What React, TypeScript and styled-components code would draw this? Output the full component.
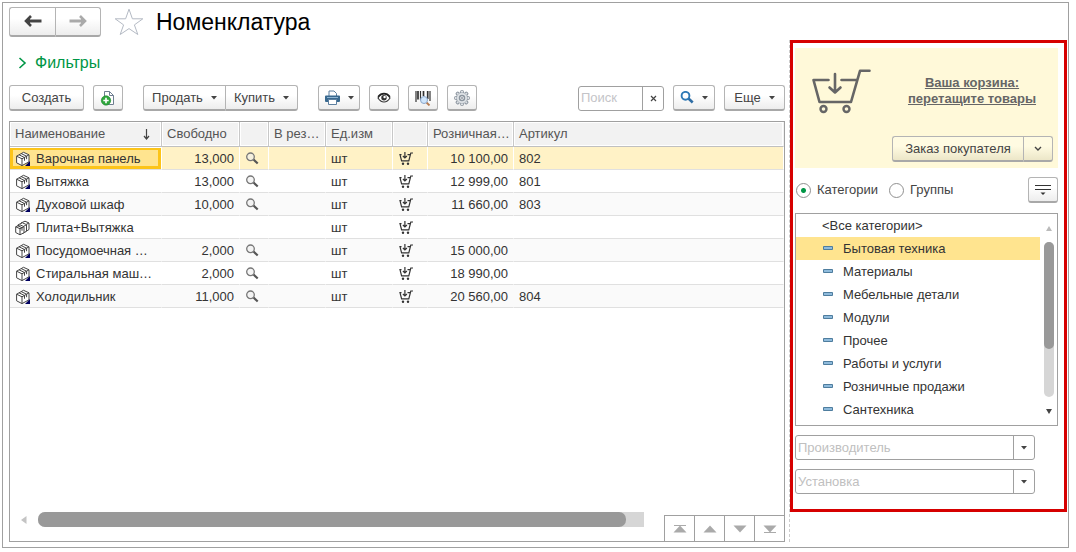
import React, { useState } from "react";
import styled, { createGlobalStyle, css } from "styled-components";

const GlobalStyle = createGlobalStyle`
  * { box-sizing: border-box; }
  body {
    margin: 0;
    background: #fff;
    color: #333;
    font: 13px/16px "Liberation Sans", Arial, sans-serif;
  }
  button, input, select { font: inherit; color: inherit; margin: 0; }
  svg { display: block; flex: none; }
`;

const line = "#a0a0a0";

const Window = styled.div`
  display: grid;
  grid-template-rows: 37px 1fr;
  min-height: calc(100vh - 6px);
  margin: 2px 7px 4px 2px;
  border: 1px solid ${line};
`;

const TitleBar = styled.header`
  display: flex;
  align-items: center;
  padding: 0 6px;
`;

const Title = styled.h1`
  margin: 0 0 0 12px;
  font-size: 23px;
  line-height: 28px;
  font-weight: 400;
  color: #000;
`;

const Body = styled.div`
  display: grid;
  grid-template-columns: minmax(0, 1fr) 278px;
  gap: 4px;
  padding-right: 1px;
`;

const Main = styled.main`
  display: flex;
  flex-direction: column;
  min-width: 0;
  padding: 10px 0 5px 6px;
`;

const raised = css`
  border: 1px solid #b4b4b4;
  border-bottom: 2px solid #a8a8a8;
  background: linear-gradient(#fff 40%, #ededed);
`;

const Button = styled.button<{ $width?: number; $tall?: boolean; $cream?: boolean }>`
  ${raised}
  display: flex;
  align-items: center;
  justify-content: center;
  gap: 8px;
  flex: none;
  width: ${(p) => (p.$width ? `${p.$width}px` : "auto")};
  height: ${(p) => (p.$tall ? 30 : 26)}px;
  padding: 0;
  border-radius: 3px;
  color: #444;
  white-space: nowrap;
  ${(p) => p.$cream && "background: linear-gradient(#fffbe2 40%, #ece6c8);"}
`;

const Joined = styled.div`
  display: flex;
  & > button:not(:last-child) { border-top-right-radius: 0; border-bottom-right-radius: 0; border-right-width: 0; }
  & > button:not(:first-child) { border-top-left-radius: 0; border-bottom-left-radius: 0; }
`;

const StarButton = styled.button`
  margin-left: 13px;
  padding: 0;
  border: 0;
  background: none;
`;

const FiltersToggle = styled.button`
  display: flex;
  align-items: center;
  align-self: flex-start;
  gap: 8px;
  height: 25px;
  padding: 0 9px;
  border: 0;
  background: none;
  color: #009646;
  font-size: 16px;
`;

const Toolbar = styled.div`
  display: flex;
  align-items: center;
  gap: 9px;
  margin: 10px 0;
`;

const Group = styled.div<{ $push?: boolean }>`
  display: flex;
  align-items: center;
  gap: 9px;
  margin-left: ${(p) => (p.$push ? "auto" : "11px")};
`;

const SearchBox = styled.div`
  display: flex;
  width: 86px;
  height: 25px;
  border: 1px solid ${line};
  border-radius: 3px;
`;

const SearchInput = styled.input`
  flex: 1;
  min-width: 0;
  padding: 0 2px;
  border: 0;
  background: none;
  &::placeholder { color: #c4c4c8; opacity: 1; }
`;

const ClearButton = styled.button`
  display: grid;
  place-items: center;
  width: 21px;
  padding: 0;
  border: 0;
  border-left: 1px solid ${line};
  background: none;
`;

const GridPanel = styled.section`
  display: flex;
  flex: 1;
  flex-direction: column;
  border: 1px solid ${line};
`;

const Table = styled.table`
  width: 100%;
  table-layout: fixed;
  border-collapse: separate;
  border-spacing: 0;
`;

const Th = styled.th`
  height: 25px;
  padding: 0 0 0 5px;
  border-right: 1px solid #c8c8c8;
  border-bottom: 1px solid #c0c0c0;
  background: #f2f2f2;
  box-shadow: inset 0 0 0 1px #fff;
  color: #555;
  font-weight: 400;
  text-align: left;
  white-space: nowrap;
  &:last-child { border-right-color: #f2f2f2; }
`;

const HeadSort = styled.span`
  display: flex;
  align-items: center;
  justify-content: space-between;
  padding-right: 11px;
`;

const Row = styled.tr<{ $active: boolean }>`
  background: ${(p) => (p.$active ? "#fff2c6" : "#fff")};
  &:nth-child(odd) { background: ${(p) => (p.$active ? "#fff2c6" : "#fafafa")}; }
  td { border-right: 1px solid ${(p) => (p.$active ? "#fff" : "transparent")}; }
`;

const Td = styled.td<{ $right?: boolean; $current?: boolean }>`
  height: 23px;
  padding: 1px 5px 0;
  border-bottom: 1px solid #e0e0e0;
  text-align: ${(p) => (p.$right ? "right" : "left")};
  white-space: nowrap;
  ${(p) =>
    p.$current &&
    css`
      background: #ffe48f;
      box-shadow: inset 0 1px #fff, inset 0 0 0 3px #fcc419;
    `}
`;

const ItemName = styled.span`
  display: flex;
  align-items: center;
  gap: 5px;
`;

const Footer = styled.div`
  display: flex;
  align-items: flex-start;
  height: 29px;
  margin-top: auto;
  padding-left: 11px;
`;

const HScroll = styled.div`
  flex: 1;
  display: grid;
  grid-template-columns: 6px 1fr;
  align-items: center;
  gap: 11px;
  margin-right: 20px;
`;

const HTrack = styled.div`
  height: 15px;
  border-radius: 7px 0 0 7px;
  background: #d6d6d6;
`;

const HThumb = styled.div`
  width: 97%;
  height: 15px;
  border-radius: 7px;
  background: #999;
`;

const Pager = styled.div`
  display: flex;
  align-self: flex-end;
  height: 26px;
  border-top: 1px solid ${line};
`;

const PagerButton = styled.button`
  display: grid;
  place-items: center;
  width: 30px;
  padding: 0;
  border: 0;
  border-left: 1px solid ${line};
  background: #fff;
`;

const Side = styled.aside`
  margin-bottom: 5px;
  border-left: 1px dashed #ccc;
`;

const Highlight = styled.div`
  padding: 5px 6px 15px 2px;
  border: 3px solid #d60000;
`;

const Basket = styled.section`
  display: grid;
  grid-template-columns: 86px 1fr;
  align-items: start;
  height: 120px;
  padding: 20px 5px 6px 15px;
  background: #fff9d9;
`;

const BasketLink = styled.a`
  justify-self: center;
  margin: 7px 5px 0 0;
  color: #666;
  font-weight: 700;
  text-align: center;
`;

const BasketActions = styled.div`
  grid-column: 1 / -1;
  justify-self: end;
  align-self: end;
`;

const ModeRow = styled.div`
  display: flex;
  align-items: center;
  gap: 11px;
  margin: 9px 0 10px;
  padding-left: 1px;
  & > button { margin-left: auto; }
`;

const RadioLabel = styled.label`
  display: flex;
  align-items: center;
  gap: 6px;
  color: #444;
`;

const Radio = styled.input`
  appearance: none;
  width: 15px;
  height: 15px;
  border: 1px solid #909090;
  border-radius: 50%;
  &:checked { background: radial-gradient(circle, #009646 0 2px, #fff 3px); }
`;

const ListBox = styled.div`
  display: grid;
  grid-template-columns: minmax(0, 1fr) 17px;
  height: 213px;
  border: 1px solid ${line};
`;

const List = styled.ul`
  margin: 0;
  padding: 0;
  list-style: none;
`;

const ListItem = styled.button<{ $selected: boolean }>`
  display: flex;
  align-items: center;
  gap: 9px;
  width: 100%;
  height: 23px;
  padding: 0 0 0 26px;
  border: 0;
  background: ${(p) => (p.$selected ? "#ffe48f" : "none")};
`;

const VScroll = styled.div`
  display: grid;
  grid-template-rows: 28px 155px 1fr;
  justify-items: center;
  align-items: center;
`;

const VTrack = styled.div`
  align-self: stretch;
  width: 10px;
  border-radius: 5px;
  background: #d6d6d6;
`;

const VThumb = styled.div`
  height: 69%;
  border-radius: 5px;
  background: #999;
`;

const Combo = styled.label`
  display: grid;
  grid-template-columns: minmax(0, 1fr) 21px;
  height: 25px;
  margin: 9px 23px 0 0;
  border: 1px solid ${line};
  border-radius: 3px;
`;

const Select = styled.select`
  grid-area: 1 / 1 / 2 / 3;
  appearance: none;
  padding: 0 2px;
  border: 0;
  background: none;
  color: #c0c0c0;
`;

const ComboArrow = styled.span`
  grid-area: 1 / 2 / 2 / 3;
  display: grid;
  place-items: center;
  border-left: 1px solid ${line};
  pointer-events: none;
`;

const Caret = () => (
  <svg width="6" height="4" viewBox="0 0 6 4"><path d="M0 0h6L3 3.600z" fill="#444" /></svg>
);

const NavArrow = ({ back }: { back?: boolean }) => (
  <svg width="18" height="14" viewBox="0 0 18 14">
    <path d={back ? "M17.500 7H5" : "M.5 7H13"} stroke={back ? "#444" : "#aaa"} strokeWidth="3" />
    <path
      d={back ? "M7 2 2 7l5 5" : "M11 2l5 5-5 5"}
      fill="none" stroke={back ? "#444" : "#aaa"} strokeWidth="2.600"
    />
    <path d={back ? "M2 7l4-3v6z" : "M16 7l-4-3v6z"} fill={back ? "#444" : "#aaa"} />
  </svg>
);

const Star = () => (
  <svg width="30" height="28" viewBox="0 0 30 28">
    <path d="M15 1.200 18.400 10.800H28.800L20.400 16.900 23.800 26.500 15 20.600 6.200 26.500 9.600 16.900 1.200 10.800H11.600z" fill="#fff" stroke="#b4bac4" />
  </svg>
);

const NewDoc = () => (
  <svg width="16" height="16" viewBox="0 0 16 16">
    <path d="M4.500 1.500h5l4 4v9h-9z" fill="#fff" stroke="#6f7f91" />
    <path d="M9.500 1.500v4h4" fill="none" stroke="#6f7f91" />
    <circle cx="6" cy="10.500" r="4.700" fill="#2fa63c" stroke="#16882a" strokeWidth=".6" />
    <path d="M6 7.800v5.400M3.300 10.500h5.400" stroke="#fff" strokeWidth="1.600" />
  </svg>
);

const Printer = () => (
  <svg width="15" height="15" viewBox="0 0 15 15">
    <path d="M4 6V1h5l2.500 2.500V6" fill="#fff" stroke="#5d7f9f" />
    <path d="M1 5.500h13a1 1 0 0 1 1 1V11a1 1 0 0 1-1 1H1a1 1 0 0 1-1-1V6.500a1 1 0 0 1 1-1z" fill="#39698f" />
    <path d="M2 7.500h11" stroke="#8db4d3" />
    <path d="M3.500 9.500h8v5h-8z" fill="#fff" stroke="#5d7f9f" />
  </svg>
);

const Eye = () => (
  <svg width="14" height="12" viewBox="0 0 14 12">
    <path d="M1 6Q3.500 2 7 2t6 4Q10.500 10 7 10T1 6z" fill="#fff" stroke="#333" strokeWidth="1.200" />
    <path d="M1 4.700Q3.500 1.500 7 1.500t6 3.200" fill="none" stroke="#222" strokeWidth="1.400" />
    <circle cx="7" cy="5.800" r="2.700" fill="#333" />
    <circle cx="7.600" cy="5" r="1.200" fill="#fff" />
  </svg>
);

const Barcode = () => (
  <svg width="16" height="16" viewBox="0 0 16 16">
    <path d="M1 1v11M5.500 1v9M15 1v10" stroke="#333" strokeWidth="1.200" />
    <path d="M3 1v8.500M8.500 1v5M12.700 1v8" stroke="#333" strokeWidth="1.700" />
    <path d="m11.500 12.500 3 3" stroke="#b67b50" strokeWidth="1.800" />
    <circle cx="9" cy="10" r="3.500" fill="#cfe5fb" stroke="#8ba6c9" />
  </svg>
);

const gearTeeth = [0, 45, 90, 135, 180, 225, 270, 315];

const Gear = () => (
  <svg width="16" height="16" viewBox="0 0 16 16">
    <g stroke="#8c959f" fill="#dfe3e7">
      {gearTeeth.map((a) => (
        <rect key={a} x="6.500" y=".5" width="3" height="4" rx="1" transform={`rotate(${a} 8 8)`} />
      ))}
      <circle cx="8" cy="8" r="5.500" strokeOpacity=".5" />
      <circle cx="8" cy="8" r="2.500" fill="#fff" strokeWidth="1.500" />
    </g>
    <circle cx="8" cy="8" r="1" fill="#8c959f" />
  </svg>
);

const Magnifier = ({ blue }: { blue?: boolean }) => (
  <svg width="14" height="13" viewBox="0 0 14 13">
    <path d="m8.500 7.500 4.200 4" stroke={blue ? "#2e6da4" : "#555"} strokeWidth={blue ? 2.6 : 2.2} />
    <circle cx="5.500" cy="4.800" r={blue ? 3.9 : 3.8} fill={blue ? "#fff" : "#eee"} fillOpacity=".6" stroke={blue ? "#2e79b5" : "#777"} strokeWidth={blue ? 1.9 : 1.3} />
  </svg>
);

const Cube = () => (
  <svg width="16" height="16" viewBox="0 0 16 16">
    <g fill="#fff" stroke="#444" strokeLinejoin="round">
      <path d="M1.600 5.200 8.500 1.300l5.500 2.500v7L7 14.600l-5.400-2.800z" />
      <path d="m1.600 5.200 5.400 2.600 7-4M7 7.800v6.800M4 3.800l5.500 2.700v3.200M6.200 2.600l5.400 2.600v3" fill="none" />
    </g>
    <path d="M15 10v5h-5z" fill="#00005f" />
  </svg>
);

const CubeSet = () => (
  <svg width="16" height="16" viewBox="0 0 16 16">
    <g fill="#fff" stroke="#444" strokeLinejoin="round">
      <path d="M6 3 10 1.200l4 1.800v6.500L10 12 6 9.500z" />
      <path d="m6 3 4 2 4-2" />
      <path d="M3 4.800 7.500 2.800l4 1.900v6.500L7.500 13.500 3 11z" />
      <path d="m3 4.800 4.500 2.200 4-2.300" />
      <path d="M.7 6.800 5 4.800l4 1.900v6L5 14.800.7 12.500z" />
      <path d="M.7 6.800 5 8.700l4-2M5 8.700v6M2.800 5.800 7 7.700v3" fill="none" />
    </g>
  </svg>
);

const RowCart = () => (
  <svg width="16" height="14" viewBox="0 0 16 14">
    <path d="M3.500 2.600H2l1.600 6.200h7.200l2-7.800H15M6.900 0v5.500M4.900 4l2 2 2-2M9.500 2.600h2.500" fill="none" stroke="#333" strokeWidth="1.200" />
    <circle cx="5" cy="11.800" r="1.200" fill="#333" /><circle cx="10" cy="11.800" r="1.200" fill="#333" />
  </svg>
);

const BigCart = () => (
  <svg width="62" height="46" viewBox="0 0 62 46">
    <g fill="none" stroke="#666" strokeWidth="2.600" strokeLinecap="round" strokeLinejoin="round">
      <path d="M18.500 12H3.500l6 22H41L50 2.800H59.500M31.500 12H46" />
      <path d="M25 6v18M19.500 19.500l5.500 5 5.500-5" />
      <circle cx="13.500" cy="41" r="3" strokeWidth="2.400" />
      <circle cx="36.500" cy="41" r="3" strokeWidth="2.400" />
    </g>
  </svg>
);

const Dash = () => (
  <svg width="12" height="8" viewBox="0 0 12 8"><path d="M1.500 1.500h9v3h-9z" fill="#8fbbdc" stroke="#4e7d9e" /></svg>
);

const PageIcon = ({ down, edge }: { down?: boolean; edge?: boolean }) => (
  <svg width="14" height="10" viewBox="0 0 14 10">
    <g transform={down ? "rotate(180 7 5)" : undefined} fill="#aaa">
      <path d="M7 1.500 13.500 8.500H.5z" />
      {edge && <path d="M1 1h12v1H1z" />}
    </g>
  </svg>
);

type Item = { name: string; free?: string; price?: string; code?: string; set?: boolean };

const items: Item[] = [
  { name: "Варочная панель", free: "13,000", price: "10 100,00", code: "802" },
  { name: "Вытяжка", free: "13,000", price: "12 999,00", code: "801" },
  { name: "Духовой шкаф", free: "10,000", price: "11 660,00", code: "803" },
  { name: "Плита+Вытяжка", set: true },
  { name: "Посудомоечная …", free: "2,000", price: "15 000,00" },
  { name: "Стиральная маш…", free: "2,000", price: "18 990,00" },
  { name: "Холодильник", free: "11,000", price: "20 560,00", code: "804" },
];

const categories = [
  "<Все категории>", "Бытовая техника", "Материалы", "Мебельные детали", "Модули",
  "Прочее", "Работы и услуги", "Розничные продажи", "Сантехника",
];

const columnWidths = [152, 78, 29, 57, 67, 35, 86];

export default function App() {
  const [row, setRow] = useState(0);
  const [category, setCategory] = useState(1);

  return (
    <>
      <GlobalStyle />
      <Window>
        <TitleBar>
          <Joined>
            <Button $width={46} $tall aria-label="Назад"><NavArrow back /></Button>
            <Button $width={46} $tall aria-label="Вперед"><NavArrow /></Button>
          </Joined>
          <StarButton aria-label="В избранное"><Star /></StarButton>
          <Title>Номенклатура</Title>
        </TitleBar>
        <Body>
          <Main>
            <FiltersToggle>
              <svg width="9" height="12" viewBox="0 0 9 12"><path d="m1.500 1 5.500 5-5.500 5" fill="none" stroke="#009646" strokeWidth="1.600" /></svg>
              Фильтры
            </FiltersToggle>
            <Toolbar>
              <Button $width={75}>Создать</Button>
              <Button $width={30} aria-label="Создать группу"><NewDoc /></Button>
              <Group>
                <Joined>
                  <Button $width={82}>Продать <Caret /></Button>
                  <Button $width={73}>Купить <Caret /></Button>
                </Joined>
              </Group>
              <Group>
                <Button $width={42} aria-label="Печать"><Printer /><Caret /></Button>
                <Button $width={30} aria-label="Просмотр"><Eye /></Button>
                <Button $width={30} aria-label="Поиск по штрихкоду"><Barcode /></Button>
                <Button $width={30} aria-label="Настройки"><Gear /></Button>
              </Group>
              <Group $push>
                <SearchBox>
                  <SearchInput placeholder="Поиск" aria-label="Поиск" />
                  <ClearButton aria-label="Очистить">
                    <svg width="7" height="7" viewBox="0 0 7 7"><path d="m1 1 5 5M6 1 1 6" stroke="#444" strokeWidth="1.200" /></svg>
                  </ClearButton>
                </SearchBox>
                <Button $width={42} aria-label="Найти"><Magnifier blue /><Caret /></Button>
                <Button $width={61}>Еще <Caret /></Button>
              </Group>
            </Toolbar>
            <GridPanel>
              <Table>
                <colgroup>
                  {columnWidths.map((w, i) => <col key={i} width={w} />)}
                  <col />
                </colgroup>
                <thead>
                  <tr>
                    <Th>
                      <HeadSort>
                        Наименование
                        <svg width="7" height="11" viewBox="0 0 7 11"><path d="M3.500 0v9.500M1 7l2.500 3L6 7" fill="none" stroke="#444" strokeWidth="1.200" /></svg>
                      </HeadSort>
                    </Th>
                    <Th>Свободно</Th>
                    <Th />
                    <Th>В рез…</Th>
                    <Th>Ед.изм</Th>
                    <Th />
                    <Th>Розничная…</Th>
                    <Th>Артикул</Th>
                  </tr>
                </thead>
                <tbody>
                  {items.map((item, i) => (
                    <Row key={item.name} $active={i === row} onClick={() => setRow(i)}>
                      <Td $current={i === row}>
                        <ItemName>
                          {item.set ? <CubeSet /> : <Cube />}
                          {item.name}
                        </ItemName>
                      </Td>
                      <Td $right>{item.free}</Td>
                      <Td>{item.free && <Magnifier />}</Td>
                      <Td />
                      <Td>шт</Td>
                      <Td><RowCart /></Td>
                      <Td $right>{item.price}</Td>
                      <Td>{item.code}</Td>
                    </Row>
                  ))}
                </tbody>
              </Table>
              <Footer>
                <HScroll>
                  <svg width="6" height="8" viewBox="0 0 6 8"><path d="M5.500 0v8L0 4z" fill="#c4c4c4" /></svg>
                  <HTrack><HThumb /></HTrack>
                </HScroll>
                <Pager>
                  <PagerButton aria-label="В начало"><PageIcon edge /></PagerButton>
                  <PagerButton aria-label="Вверх"><PageIcon /></PagerButton>
                  <PagerButton aria-label="Вниз"><PageIcon down /></PagerButton>
                  <PagerButton aria-label="В конец"><PageIcon down edge /></PagerButton>
                </Pager>
              </Footer>
            </GridPanel>
          </Main>
          <Side>
            <Highlight>
              <Basket>
                <BigCart />
                <BasketLink href="#basket">Ваша корзина:<br />перетащите товары</BasketLink>
                <BasketActions>
                  <Joined>
                    <Button $width={131} $cream>Заказ покупателя</Button>
                    <Button $width={30} $cream aria-label="Выбрать документ">
                      <svg width="8" height="6" viewBox="0 0 8 6"><path d="m1 1 3 3 3-3" fill="none" stroke="#444" strokeWidth="1.400" /></svg>
                    </Button>
                  </Joined>
                </BasketActions>
              </Basket>
              <ModeRow>
                <RadioLabel><Radio type="radio" name="mode" defaultChecked />Категории</RadioLabel>
                <RadioLabel><Radio type="radio" name="mode" />Группы</RadioLabel>
                <Button $width={30} aria-label="Настройка списка">
                  <svg width="16" height="12" viewBox="0 0 16 12"><path d="M0 1.500h16M0 5.500h16" stroke="#333" /><path d="M5.500 8.500h5L8 11z" fill="#333" /></svg>
                </Button>
              </ModeRow>
              <ListBox>
                <List>
                  {categories.map((name, i) => (
                    <li key={name}>
                      <ListItem $selected={i === category} onClick={() => setCategory(i)}>
                        {i > 0 && <Dash />}
                        {name}
                      </ListItem>
                    </li>
                  ))}
                </List>
                <VScroll>
                  <svg width="6" height="5" viewBox="0 0 6 5"><path d="M3 0 6 5H0z" fill="#bbb" /></svg>
                  <VTrack><VThumb /></VTrack>
                  <svg width="6" height="5" viewBox="0 0 6 5"><path d="M0 0h6L3 5z" fill="#444" /></svg>
                </VScroll>
              </ListBox>
              <Combo>
                <Select aria-label="Производитель"><option>Производитель</option></Select>
                <ComboArrow><Caret /></ComboArrow>
              </Combo>
              <Combo>
                <Select aria-label="Установка"><option>Установка</option></Select>
                <ComboArrow><Caret /></ComboArrow>
              </Combo>
            </Highlight>
          </Side>
        </Body>
      </Window>
    </>
  );
}
